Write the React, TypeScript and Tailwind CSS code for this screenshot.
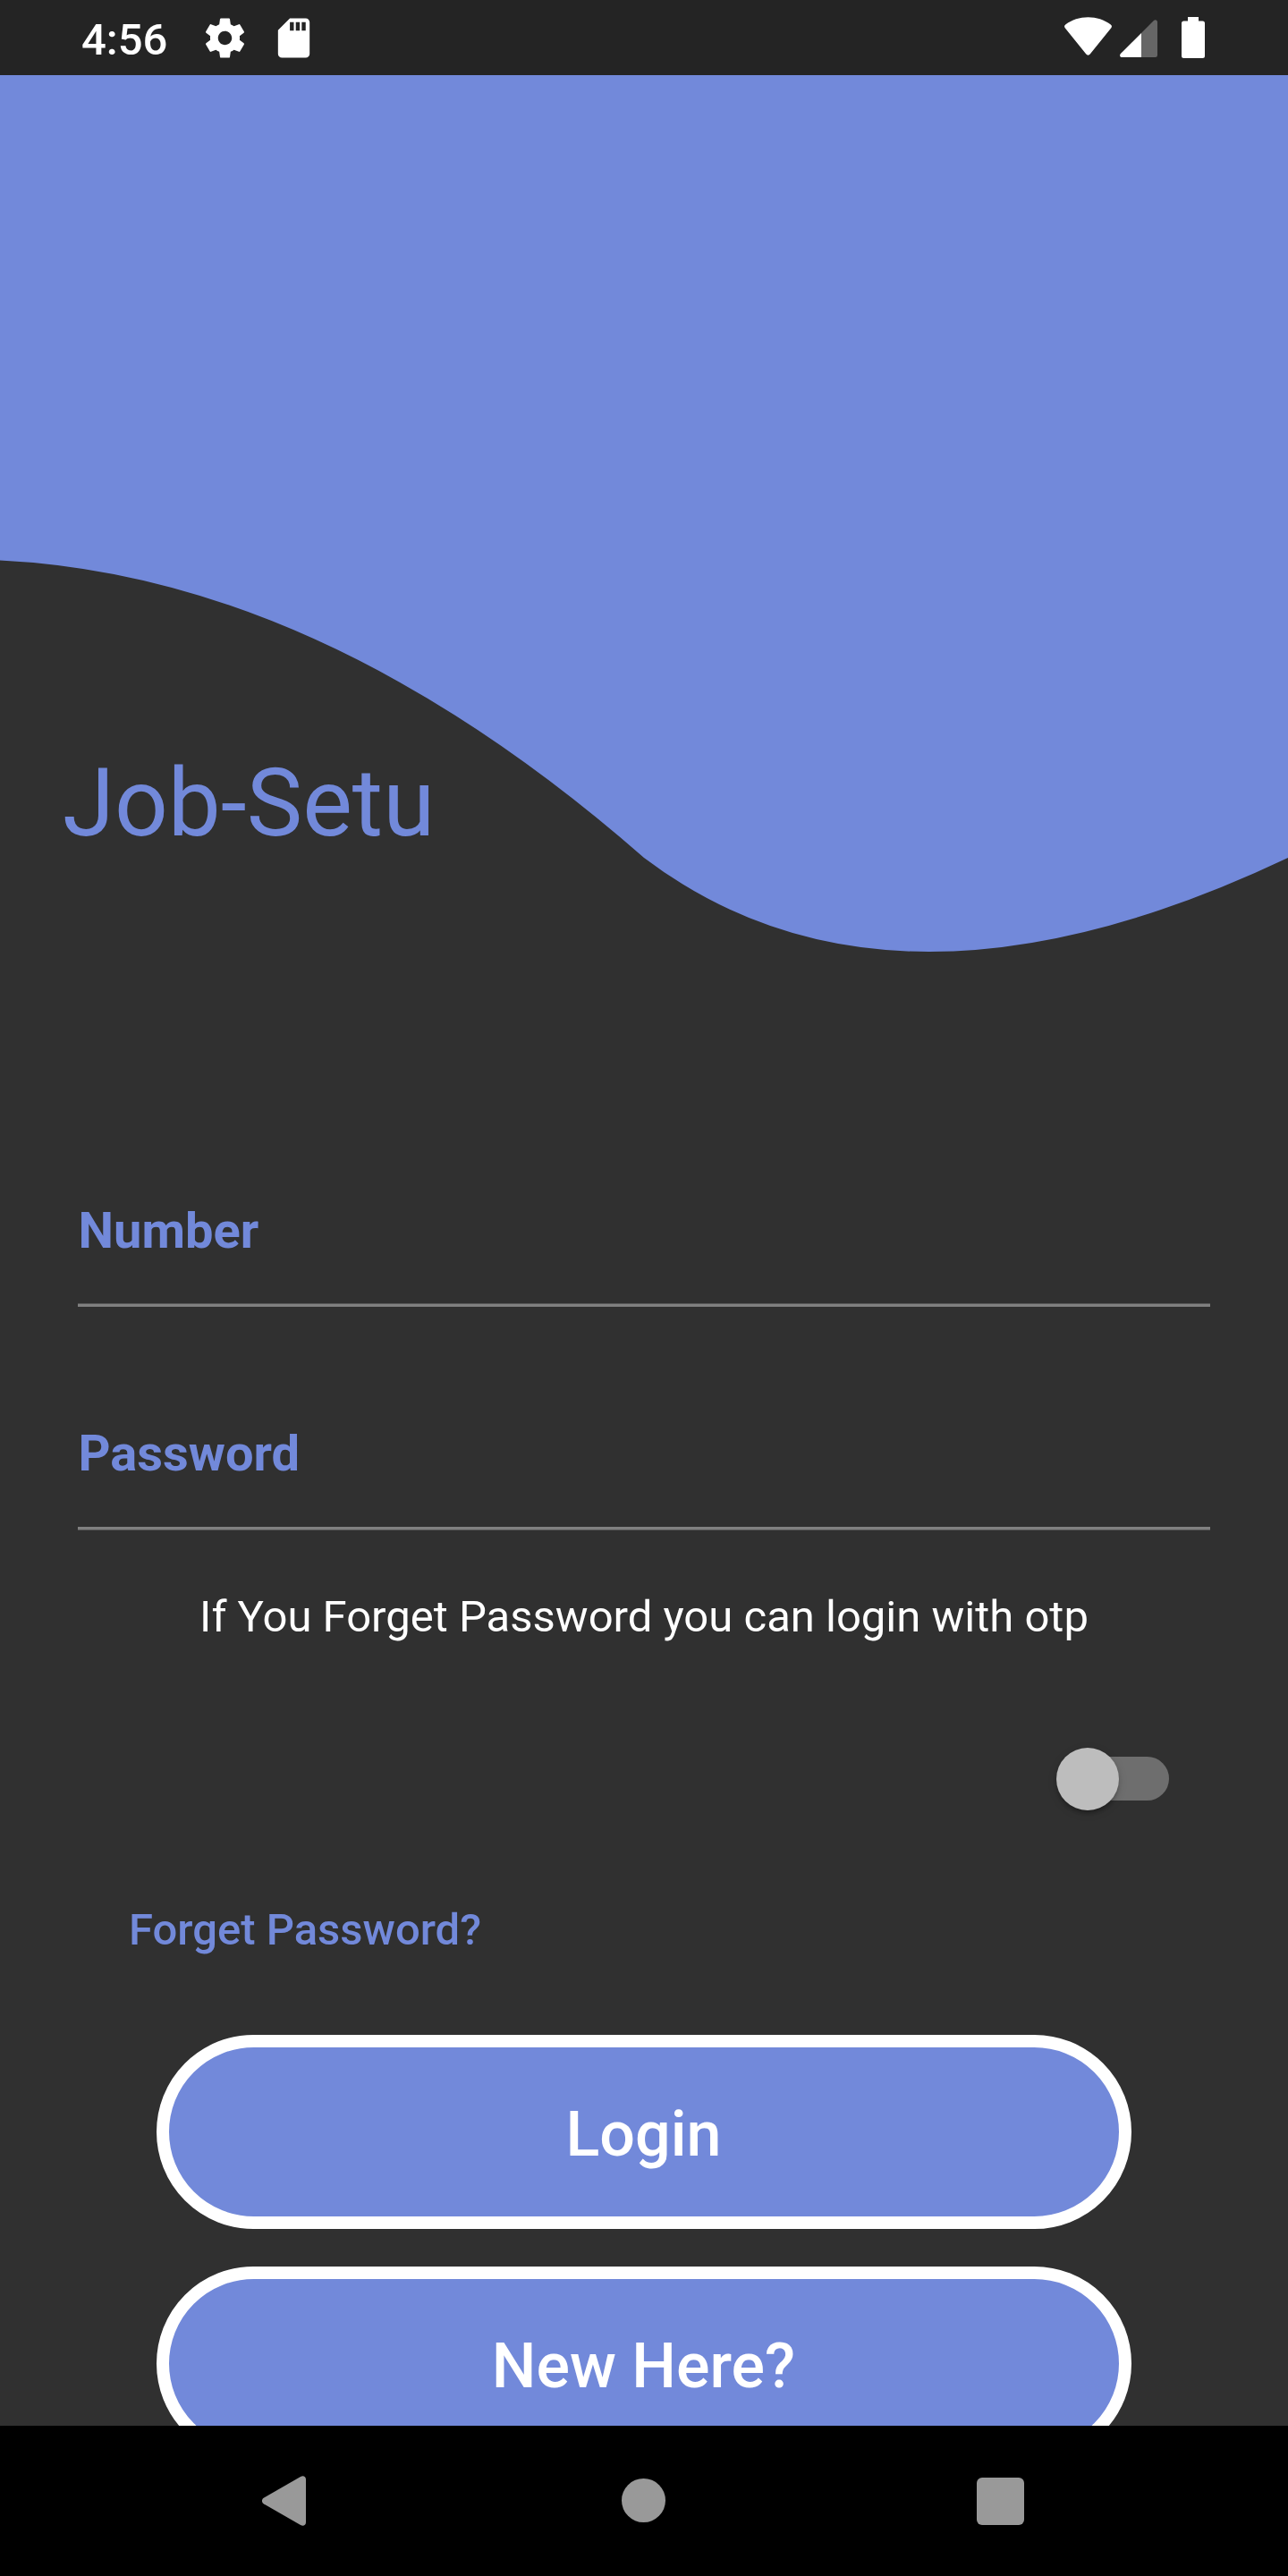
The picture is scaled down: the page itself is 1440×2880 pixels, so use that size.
const SettingsIcon = () => (
  <svg className="size-[53px]" viewBox="0 0 24 24" fill="currentColor">
    <path d="M19.43 12.98c.04-.32.07-.64.07-.98s-.03-.66-.07-.98l2.11-1.65c.19-.15.24-.42.12-.64l-2-3.46c-.12-.22-.39-.3-.61-.22l-2.49 1c-.52-.4-1.08-.73-1.69-.98l-.38-2.65C14.46 2.18 14.25 2 14 2h-4c-.25 0-.46.18-.49.42l-.38 2.65c-.61.25-1.17.59-1.69.98l-2.49-1c-.23-.09-.49 0-.61.22l-2 3.46c-.13.22-.07.49.12.64l2.11 1.65c-.04.32-.07.65-.07.98s.03.66.07.98l-2.11 1.65c-.19.15-.24.42-.12.64l2 3.46c.12.22.39.3.61.22l2.49-1c.52.4 1.08.73 1.69.98l.38 2.65c.03.24.24.42.49.42h4c.25 0 .46-.18.49-.42l.38-2.65c.61-.25 1.17-.59 1.69-.98l2.49 1c.23.09.49 0 .61-.22l2-3.46c.12-.22.07-.49-.12-.64l-2.11-1.65zM12 15.5c-1.93 0-3.5-1.57-3.5-3.5s1.57-3.5 3.5-3.5 3.5 1.57 3.5 3.5-1.57 3.5-3.5 3.5z" />
  </svg>
);

const SdCardIcon = () => (
  <svg className="ml-6 size-[53px]" viewBox="0 0 24 24" fill="currentColor">
    <path d="M18 2h-8L4 8v12c0 1.100.9 2 2 2h12c1.100 0 2-.9 2-2V4c0-1.100-.9-2-2-2zm-6 6.300h-2V4h2v4.300zm3 0h-2V4h2v4.300zm3 0h-2V4h2v4.300z" />
  </svg>
);

const WifiIcon = () => (
  <svg width="53" height="43" viewBox="0 0 53 43" fill="currentColor">
    <path d="M.7 12.300C-.3 11-.2 9.600 1.200 8.500C8.500 3.200 17 .3 26.500.3S44.500 3.200 51.800 8.500C53.200 9.600 53.300 11 52.300 12.300L28.700 41.600C27.500 43.100 25.500 43.100 24.300 41.600Z" />
  </svg>
);

const SignalIcon = () => (
  <svg className="ml-[9px]" width="42" height="42" viewBox="0 0 42 42">
    <path d="M24 15L37.900 1.100C39.500-.5 42 .2 42 2.700V39.700Q42 42 39.700 42H24Z" fill="#666" />
    <path d="M24 15V42H2.500C.1 42-.7 39.700.9 38.100Z" fill="#fff" />
  </svg>
);

const BatteryIcon = () => (
  <svg className="ml-[27px]" width="26" height="46" viewBox="0 0 26 46" fill="currentColor">
    <path d="M7 0H19V4.500H23.500Q26 4.500 26 7V43.500Q26 46 23.500 46H2.500Q0 46 0 43.500V7Q0 4.500 2.500 4.500H7Z" />
  </svg>
);

function Field({ label, softTop }: { label: string; softTop?: boolean }) {
  return (
    <div className="flex h-[250px] flex-col justify-end">
      <div className={`flex items-start pl-[0.5px] text-[56px] leading-[72px] font-bold ${softTop ? "h-[117px]" : "h-[118px]"}`}>
        {label}
      </div>
      {softTop && <div className="h-px bg-[#585858]" />}
      <div className="h-[3px] bg-[#808080]" />
      {!softTop && <div className="h-px bg-[#585858]" />}
    </div>
  );
}

function PillButton({ label }: { label: string }) {
  return (
    <button className="flex h-[217px] w-[1090px] shrink-0 items-center justify-center rounded-full border-[14px] border-white bg-[#7289da] pt-[5px] pr-[1px] text-[70px] leading-[82px] font-medium text-white">
      {label}
    </button>
  );
}

export default function App() {
  return (
    <div className="flex h-[2880px] w-[1440px] flex-col overflow-hidden bg-[#303030] font-['Roboto',sans-serif] text-[#7289da]">
      <header className="flex h-[84px] shrink-0 items-center justify-between bg-[#242424] pr-[93px] pl-[91px] text-white">
        <div className="flex items-center">
          <span className="w-[134px] pt-[6px] text-[49px] leading-[58px] font-medium">4:56</span>
          <SettingsIcon />
          <SdCardIcon />
        </div>
        <div className="flex h-[46px] items-start">
          <WifiIcon />
          <div className="pt-[3px]">
            <SignalIcon />
          </div>
          <BatteryIcon />
        </div>
      </header>

      <main className="flex h-[2628px] shrink-0 flex-col overflow-hidden">
        <section className="grid h-[1042px] shrink-0">
          <svg className="col-start-1 row-start-1" width="1440" height="1042" viewBox="0 0 1440 1042">
            <path d="M0 0V542.500Q360 560 720 875Q997.500 1085 1440 875V0Z" fill="#7289da" />
          </svg>
          <h1 className="col-start-1 row-start-1 mt-[752px] pl-[70px] text-[105px] leading-[126px]">Job-Setu</h1>
        </section>

        <section className="px-[87px] pt-[85px]">
          <Field label="Number" softTop />
          <Field label="Password" />
        </section>

        <p className="mt-[68px] text-center text-[49px] leading-[57px] text-white">
          If You Forget Password you can login with otp
        </p>

        <div className="mt-[117px] flex justify-end pr-[133px]">
          <button
            role="switch"
            aria-checked="false"
            aria-label="Login with otp"
            className="flex h-[71px] w-[126px] items-center"
          >
            <span className="z-10 size-[70px] shrink-0 rounded-full bg-[#bdbdbd] shadow-[0_5px_4px_-3px_rgba(0,0,0,0.2),0_3px_4px_rgba(0,0,0,0.14),0_3px_11px_rgba(0,0,0,0.12)]" />
            <span className="-ml-[60px] h-[49px] w-[116px] shrink-0 rounded-full bg-[#6e6e6e]" />
          </button>
        </div>

        <a className="mt-[105px] pl-[144px] text-[49px] leading-[57px] font-medium">Forget Password?</a>

        <div className="mt-[89px] flex flex-col items-center gap-[42px]">
          <PillButton label="Login" />
          <PillButton label="New Here?" />
        </div>
      </main>

      <nav className="flex h-[168px] shrink-0 items-center bg-black pl-[293px] text-[#999]">
        <svg width="49" height="56" viewBox="0 0 49 56" fill="currentColor">
          <path d="M1.700 24.700L43 .9C46-.8 49 .8 49 4V52C49 55.200 46 56.800 43 55.100L1.700 31.300C-.6 29.800-.6 26.200 1.700 24.700Z" />
        </svg>
        <span className="mb-px ml-[353px] size-[49px] rounded-full bg-current" />
        <span className="ml-[348px] size-[53px] rounded-[6px] bg-current" />
      </nav>
    </div>
  );
}
